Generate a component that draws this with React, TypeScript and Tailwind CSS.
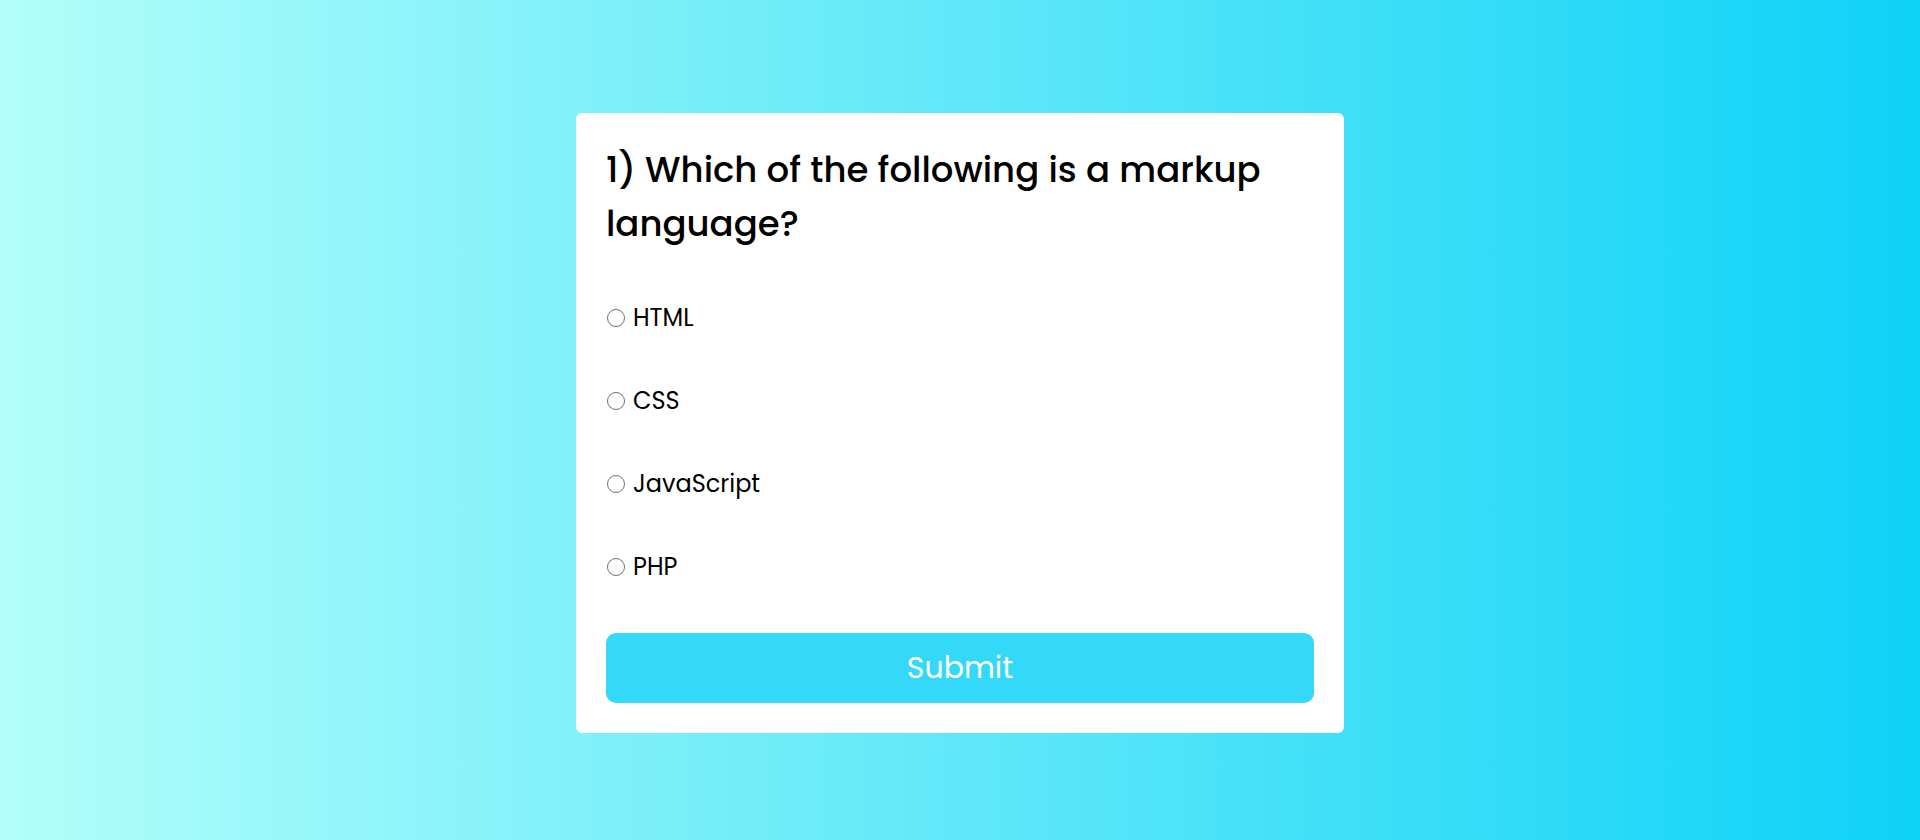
import React from "react";

const options = ["HTML", "CSS", "JavaScript", "PHP"];

export default function App() {
  return (
    <div
      className="w-full h-[840px] flex items-center justify-center bg-[linear-gradient(to_right,#b2fefa,#0ed2f7)]"
      style={{ fontFamily: "'Poppins', 'Open Sans', 'Noto Sans', sans-serif" }}
    >
      <div className="w-[768px] bg-white rounded-[6px] p-[30px] flex flex-col mt-[6px]">
        <h2 className="text-[35.5px] leading-[54px] font-medium text-black">
          1) Which of the following is a markup language?
        </h2>
        <ul className="mt-[49px] flex flex-col gap-[47px]">
          {options.map((o) => (
            <li key={o} className="flex items-center h-[36px]">
              <span className="w-[18px] h-[18px] rounded-full border-[1.5px] border-[#707070] bg-white ml-[1px] shrink-0" />
              <span className="ml-[8px] text-[24px] leading-[36px] text-black">{o}</span>
            </li>
          ))}
        </ul>
        <button className="mt-[48px] h-[70px] w-full rounded-[10px] bg-[#34d8f9] text-white text-[30px] leading-none">
          Submit
        </button>
      </div>
    </div>
  );
}
